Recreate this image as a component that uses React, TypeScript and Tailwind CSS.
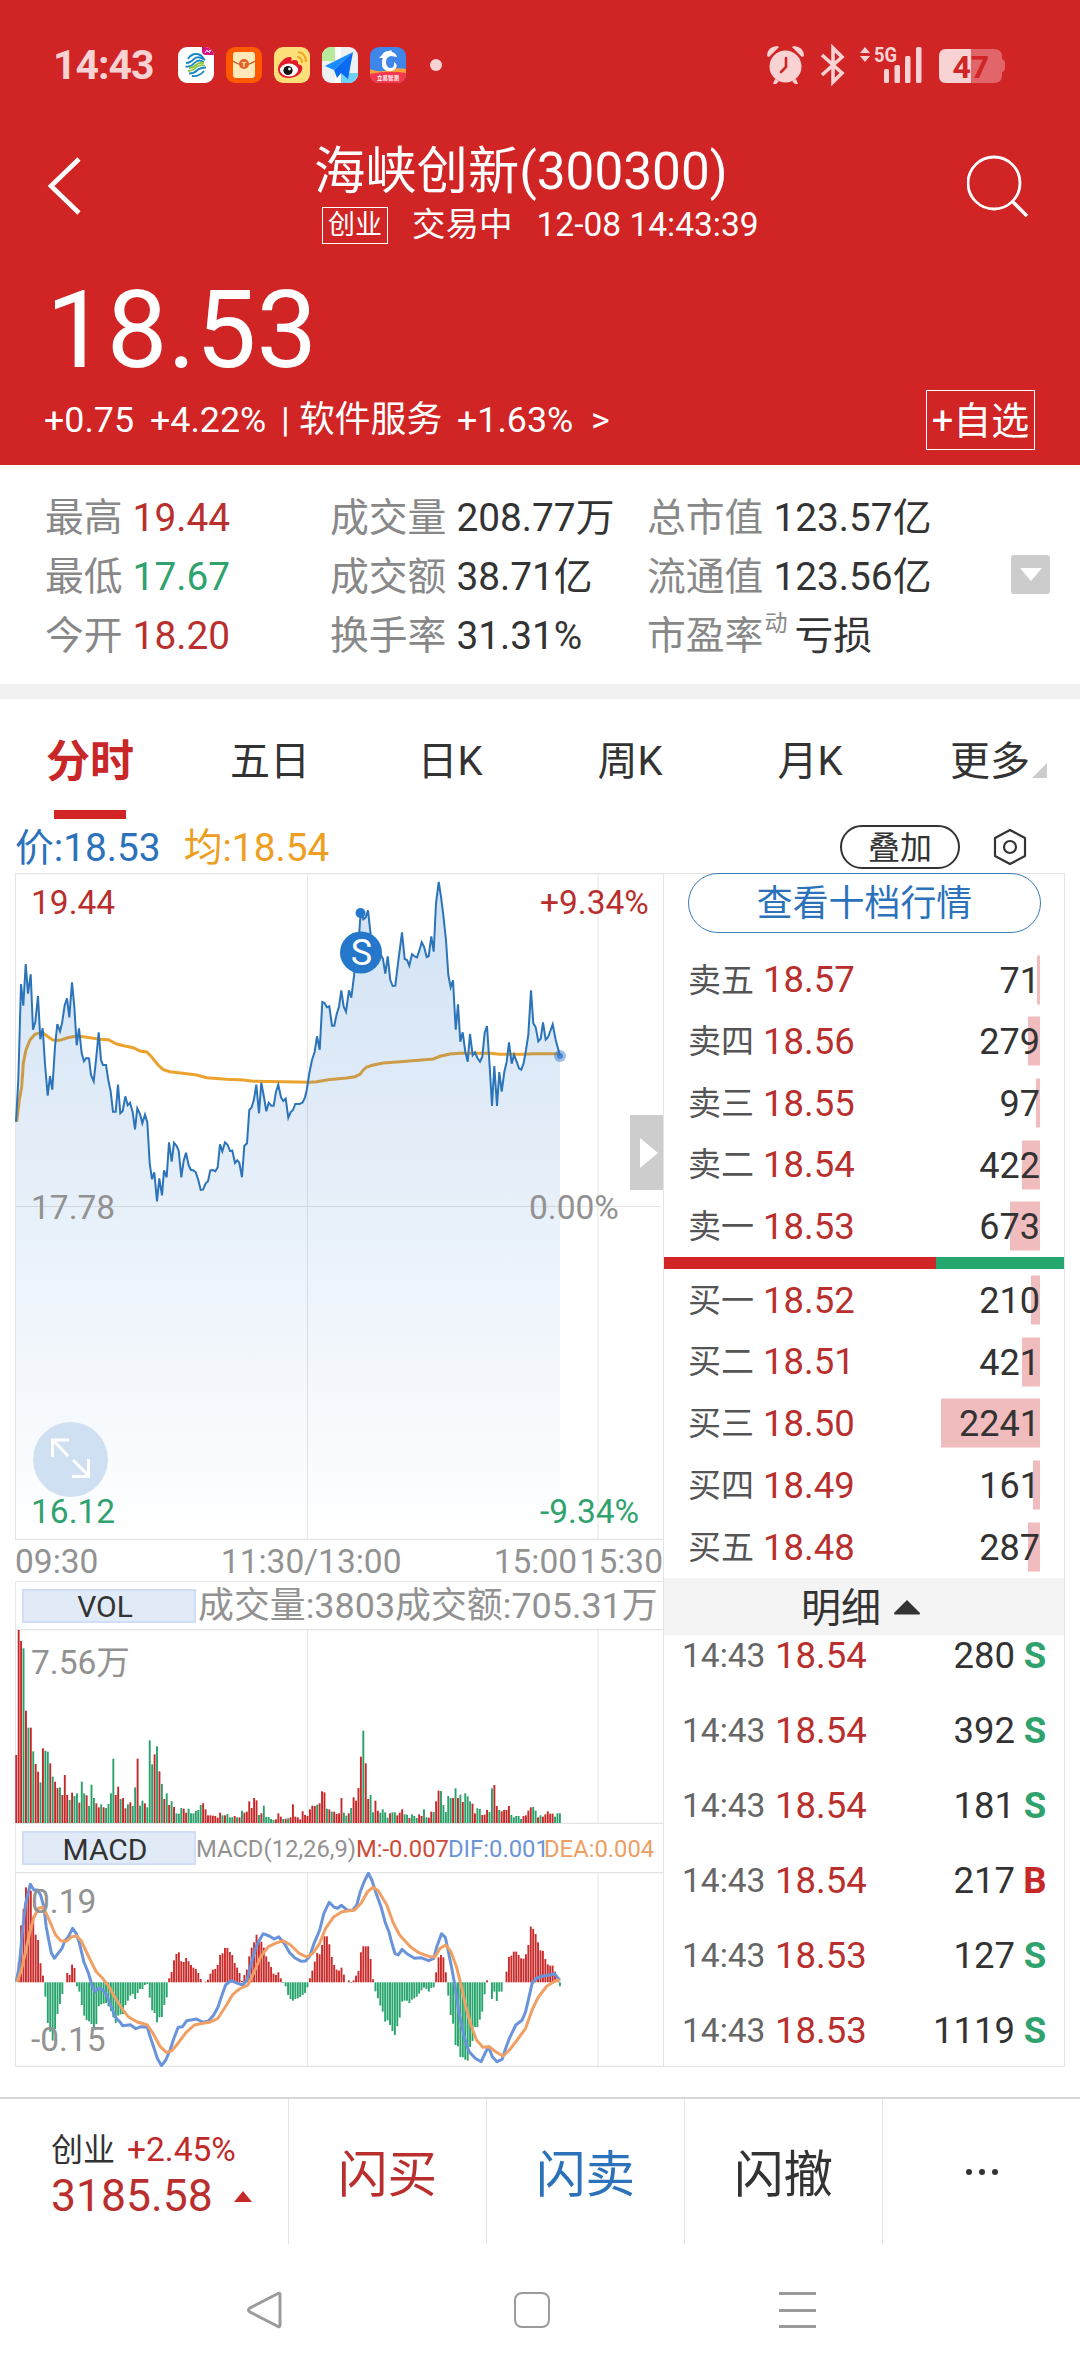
import type { ReactNode } from "react";
import clsx from "clsx";

interface Level {
  label: string;
  price: string;
  qty: number;
  bar: number;
}

interface Trade {
  price: string;
  qty: number;
  side: "S" | "B";
}

const sells: Level[] = [
  { label: "卖五", price: "18.57", qty: 71, bar: 3 },
  { label: "卖四", price: "18.56", qty: 279, bar: 12 },
  { label: "卖三", price: "18.55", qty: 97, bar: 4 },
  { label: "卖二", price: "18.54", qty: 422, bar: 18 },
  { label: "卖一", price: "18.53", qty: 673, bar: 30 },
];

const buys: Level[] = [
  { label: "买一", price: "18.52", qty: 210, bar: 9 },
  { label: "买二", price: "18.51", qty: 421, bar: 18 },
  { label: "买三", price: "18.50", qty: 2241, bar: 99 },
  { label: "买四", price: "18.49", qty: 161, bar: 7 },
  { label: "买五", price: "18.48", qty: 287, bar: 12 },
];

const trades: Trade[] = [
  { price: "18.54", qty: 280, side: "S" },
  { price: "18.54", qty: 392, side: "S" },
  { price: "18.54", qty: 181, side: "S" },
  { price: "18.54", qty: 217, side: "B" },
  { price: "18.53", qty: 127, side: "S" },
  { price: "18.53", qty: 1119, side: "S" },
];

// x,y pairs in thirds of a pixel
const PRICE =
  "48,785 55,660 63,372 70,437 77,312 84,401 92,343 99,509 106,485 114,408 121,538 128,505 135,612 143,707 150,648 157,689 165,560 172,492 180,514 186,490 194,436 201,415 208,472 216,367 223,440 230,556 237,505 245,580 252,604 259,594 267,595 273,645 281,664 288,600 296,517 303,600 309,615 318,615 325,660 332,695 339,755 347,755 354,674 361,760 368,753 376,709 383,736 390,728 398,757 405,808 412,745 420,762 427,790 435,764 442,787 449,910 456,958 463,937 471,1024 478,955 486,1006 492,931 500,952 507,847 515,905 522,848 530,858 536,872 544,952 551,902 558,878 566,916 573,930 580,931 587,937 595,960 602,990 609,989 617,970 624,964 631,931 639,930 646,934 653,922 660,853 667,874 675,847 683,855 690,873 697,872 705,909 712,901 718,908 726,952 733,858 741,850 748,750 755,742 762,718 769,674 777,760 784,668 792,712 799,754 806,728 814,737 821,737 828,695 835,674 843,712 850,723 857,716 865,773 872,756 879,750 886,732 894,732 901,731 908,727 915,712 920,690 928,640 936,600 944,575 951,529 959,569 967,426 973,428 981,442 988,439 996,497 1003,497 1010,462 1017,440 1024,391 1031,440 1038,455 1047,391 1054,413 1060,365 1068,300 1076,240 1082,158 1090,178 1097,172 1104,151 1112,225 1120,245 1130,262 1140,280 1149,297 1156,341 1163,289 1171,360 1178,378 1186,377 1194,310 1200,264 1206,217 1214,297 1221,300 1228,317 1236,283 1244,289 1251,292 1258,272 1265,247 1272,260 1280,291 1286,288 1294,229 1301,275 1308,130 1316,66 1323,110 1330,165 1338,240 1345,345 1352,382 1359,361 1367,509 1374,433 1381,545 1388,517 1396,575 1403,605 1410,522 1418,586 1425,577 1432,593 1440,605 1447,590 1454,518 1461,498 1469,620 1476,738 1483,618 1491,738 1498,636 1505,695 1513,636 1520,605 1527,547 1535,611 1542,584 1550,605 1557,625 1564,629 1571,608 1578,570 1585,525 1593,391 1600,490 1607,502 1615,544 1622,536 1629,487 1637,539 1644,532 1651,513 1658,493 1667,540 1680,587";

const AVERAGE =
  "50,785 58,720 65,680 70,610 78,570 90,540 105,523 118,519 130,520 145,531 160,541 180,541 200,534 225,529 250,530 275,534 300,538 325,539 350,552 375,558 400,563 420,573 440,576 455,591 475,616 490,629 510,635 560,641 590,645 620,653 680,658 730,660 760,664 850,665 930,667 950,665 985,659 1040,654 1065,650 1080,643 1090,630 1100,621 1120,615 1150,609 1200,605 1300,597 1320,589 1350,582 1380,580 1470,580 1500,583 1570,583 1600,581 1680,581";

const DIF =
  "38,485 45,440 52,340 60,250 71,193 79,210 88,210 95,225 103,262 108,320 114,360 120,398 127,415 136,400 145,385 152,362 160,350 170,325 178,340 186,370 196,425 207,460 215,495 222,515 232,503 240,510 250,525 260,560 270,592 280,605 287,617 305,614 318,626 330,620 345,622 350,645 358,675 368,715 378,737 388,720 398,690 407,655 417,622 427,620 437,602 460,597 475,607 488,603 500,585 510,562 517,535 528,495 540,482 552,488 568,495 578,480 588,430 598,385 606,362 616,341 630,348 642,357 652,350 665,370 678,398 690,414 705,424 715,423 725,408 735,370 748,330 758,280 770,247 782,262 790,265 799,256 812,270 825,271 835,255 843,215 852,185 862,160 870,180 880,220 892,262 902,310 910,335 917,370 924,400 932,405 941,388 953,402 970,415 985,413 1003,422 1015,415 1022,380 1033,341 1042,352 1050,400 1058,450 1065,500 1073,570 1080,615 1088,660 1098,695 1112,715 1126,725 1135,700 1143,680 1152,710 1163,725 1175,718 1182,690 1192,655 1207,615 1222,600 1230,575 1238,530 1245,490 1255,475 1270,468 1288,465 1297,460 1303,470 1310,482";

const DEA =
  "40,485 50,450 60,395 70,335 80,290 90,265 100,262 110,285 120,315 130,345 142,362 155,364 168,350 180,348 190,362 200,390 215,430 225,455 240,475 255,500 268,530 285,565 300,590 320,605 345,615 358,640 375,680 390,698 402,692 415,672 435,638 455,615 475,610 490,607 510,595 530,555 545,523 560,507 580,495 595,455 610,410 628,380 648,368 663,362 680,375 700,400 718,411 732,400 748,370 762,325 780,292 800,275 830,270 845,250 860,215 873,202 885,212 905,255 920,308 935,345 960,380 980,398 1005,410 1018,410 1030,385 1043,375 1055,395 1068,440 1080,500 1090,560 1102,615 1115,660 1130,682 1145,680 1160,695 1177,708 1192,690 1210,660 1230,625 1245,570 1260,530 1280,498 1300,482 1310,480";

// one bar per minute, negative means a falling minute
const VOLUME = [
  204, 579, 546, -524, 337, -286, 286, -215, 177, 154, -122, 224, -217, -214, 179, -139, 124, 105, -107, 84, 144, 84,
  -69, 91, -81, -89, 61, -124, -89, 83, -51, -115, -75, 59, 47, -56, 47, -45, -57, -89, -193, 84, 109, -72, 75, 44,
  -56, 62, -51, -107, 193, -52, -67, 59, -47, -248, -176, 206, -230, 155, -117, 72, -89, 54, -65, 48, -29, -28, -45,
  43, 31, -43, -29, -29, -36, -39, -54, 59, 41, 23, 23, 22, 21, 16, 31, -23, 23, -27, -17, -17, 21, -17, 17, -37, 31,
  34, 65, 45, 75, 68, -24, 29, -52, -18, -18, -12, -9, 11, 29, 19, -12, 13, -14, 17, 56, 19, 17, 11, 35, 24, 21, 41,
  52, 51, -55, 59, 95, 92, -43, 41, -34, 34, 27, 29, 75, -31, -22, 29, -45, 77, 67, 105, 199, -277, 179, 72, -84, -32,
  67, 37, -31, -41, -32, -16, 29, -32, -32, 23, 31, 41, -26, -25, 15, -26, -21, -15, 26, 21, -41, -17, 16, 34, -33,
  65, 97, -96, -54, -33, -81, -75, 75, -104, 75, -85, 63, -89, -80, -65, 58, 29, -44, -42, 24, 25, 39, -33, -104, 114,
  51, -39, 35, 39, 39, 51, -24, -17, -21, -21, -12, 21, 23, 37, 47, -48, -37, 17, -23, 19, 26, 35, 28, 28, -19, -29,
  -29,
];

const MACD = [
  0, 60, 171, 220, 285, 275, 275, 197, 143, 127, 57, 20, -43, -122, -148, -175, -140, -95, -65, -35, 0, 28, 22, 53, 43,
  -12, -28, -68, -100, -113, -117, -125, -140, -125, -72, -66, -64, -62, -72, -86, -105, -122, -100, -96, -95, -68,
  -55, -40, -35, -50, -32, -20, -20, -8, -5, -46, -84, -92, -120, -105, -104, -68, -45, 12, 31, 66, 85, 90, 63, 61, 73,
  63, 52, 44, 40, 28, 10, 0, 2, 8, 26, 38, 40, 52, 82, 87, 103, 103, 91, 82, 58, 44, 28, 4, 22, 38, 78, 104, 120, 143,
  128, 122, 104, 78, 62, 46, 26, 22, 30, 12, -2, -12, -38, -50, -55, -50, -48, -44, -38, -32, -15, 12, 35, 62, 88, 84,
  112, 138, 138, 114, 76, 52, 38, 35, 44, 23, 0, 6, -2, 6, 20, 34, 90, 108, 108, 108, 70, 9, -27, -48, -70, -88, -118,
  -114, -128, -146, -158, -132, -106, -58, -55, -55, -62, -52, -48, -43, -34, -24, -16, -20, -28, -17, -15, 30, 75,
  82, 75, 30, -40, -98, -124, -188, -192, -224, -225, -232, -235, -194, -176, -134, -134, -112, -88, -36, 6, 0, -50,
  -28, -56, -28, -28, 0, 32, 76, 80, 92, 92, 82, 72, 71, 84, 112, 167, 160, 145, 120, 96, 94, 70, 54, 50, 50, 32, 8,
  -12,
];

function toPoints(raw: string, sx: number, dy: number) {
  return raw
    .split(" ")
    .map((p) => {
      const [x, y] = p.split(",").map(Number);
      return `${(x / sx - 15).toFixed(1)},${(y / 3 - dy).toFixed(1)}`;
    })
    .join(" ");
}

function StatusBar() {
  return (
    <div className="flex h-[130px] items-center pl-[53px] pr-[73px]">
      <span className="w-[125px] text-[41px] font-bold leading-none tracking-[-1px] text-[#f9d3d3]">14:43</span>
      <div className="flex gap-3">
        <svg viewBox="0 0 36 36" className="h-9 w-9 rounded-[9px] bg-white">
          <path d="M24 0h12v8H28q-4 0-4-4z" fill="#d4107c" />
          <path d="M27 6l2-3 1 2 2-2M31 6l2-3" stroke="#fff" strokeWidth="0.9" fill="none" />
          <g fill="none" strokeWidth="1.8">
            <path d="M10 12q3-5 8-5t8 5" stroke="#1c86c7" />
            <path d="M8 16q4 0 8-4t11 1" stroke="#1c86c7" />
            <path d="M7.500 19.500q5 1 9-3.500t9-1" stroke="#1c86c7" />
            <path d="M11 21q4 0 7-3t8-2" stroke="#8cc63f" />
            <path d="M10 24q5 0 8-3.500t9-2" stroke="#8cc63f" />
            <path d="M11 26.500q5 0 8-3t9-3M14 29q7 1 12-5" stroke="#1c86c7" />
          </g>
        </svg>
        <svg viewBox="0 0 36 36" className="h-9 w-9 rounded-[9px] bg-[#ff5a00]">
          <rect x="7" y="5" width="22" height="26" rx="3" fill="#ffe9b8" />
          <path d="M7 14q11 8 22 0" stroke="#b9491b" strokeWidth="1.2" fill="none" />
          <circle cx="18" cy="17" r="5" fill="#e0622a" />
          <text x="18" y="20" textAnchor="middle" fontSize="8" fontWeight="700" fill="#ffe9b8">T</text>
        </svg>
        <svg viewBox="0 0 36 36" className="h-9 w-9 rounded-[9px] bg-[#ffdf7a]">
          <path d="M4 22c0-6 8-13 12-12 2 0 2 2 1 4 4-2 8-1 7 3 4 1 5 3 4 6-2 6-9 8-14 8-6 0-10-4-10-9z" fill="#e3192b" />
          <ellipse cx="15" cy="23" rx="9" ry="6.5" fill="#fff" />
          <circle cx="14" cy="23.500" r="4.600" fill="#111" />
          <circle cx="15.500" cy="22" r="1.400" fill="#fff" />
          <path d="M23 10q5 0 5 6M24 5q8 1 8 10" stroke="#f5a623" strokeWidth="2.200" fill="none" />
        </svg>
        <svg viewBox="0 0 36 36" className="h-9 w-9 rounded-[9px] bg-[#eef1f2]">
          <path d="M0 0h13v14H0z" fill="#b8ea9c" />
          <path d="M19 26h17v10H17z" fill="#6fd0f7" />
          <path d="M13 0h6v36h-6z" fill="#fff" />
          <path d="M31 5L3 19l9 4z" fill="#1b8cff" />
          <path d="M31 5L12 23l3 8 4-5 7 6z" fill="#0a6bf0" />
        </svg>
        <svg viewBox="0 0 36 36" className="h-9 w-9 rounded-[9px] bg-[#3e86ea]">
          <path d="M0 22q9 4 18 1t18-1v14H0z" fill="#f9a03a" />
          <path d="M0 27q18-4 36-1v10H0z" fill="#f2394f" />
          <path
            d="M9 11l3-3q2-4 7-4l2-1 1 2q4 1 5 5l-6-1q-5 1-5 6 0 5 4 6 5 0 4-6 4 2 2 6-3 4-8 3-7-1-6-9 0-3 1-4z"
            fill="#fff"
          />
          <text x="18" y="32.500" textAnchor="middle" fontSize="5.500" fontWeight="700" fill="#fff">立易智测</text>
        </svg>
      </div>
      <span className="ml-[24px] h-3 w-3 rounded-full bg-[#f9d3d3]" />
      <svg viewBox="765 43 242 42" className="ml-auto h-[42px] w-[242px]" fill="#f9d3d3">
        <circle cx="785.500" cy="65.500" r="16" />
        <path d="M767 55q0-9 10-10l2 1-10 10zM804 55q0-9-10-10l-2 1 10 10zM775 78l-2 5h3l3-3zM796 78l2 5h-3l-3-3z" />
        <path d="M786 57v9l-5 5" stroke="#d12425" strokeWidth="2.600" strokeLinecap="round" fill="none" />
        <path d="M822 54l20 18-9 9V47l9 9-20 18" fill="none" stroke="#f9d3d3" strokeWidth="3.600" />
        <path d="M860 52l5-6 5 6zM860 55l5 6 5-6z" />
        <text x="874" y="61" fontSize="21" fontWeight="700" textLength="23" lengthAdjust="spacingAndGlyphs">5G</text>
        <rect x="884" y="68" width="5" height="14" rx="1.500" />
        <rect x="894.500" y="64" width="5.500" height="18" rx="1.500" />
        <rect x="905" y="55" width="5.500" height="27" rx="1.500" />
        <rect x="916" y="46" width="5.500" height="36" rx="1.500" />
        <path d="M946 48h48q8 0 8 8v2q3 1 3 4v5q0 3-3 4v3q0 8-8 8h-48q-7 0-7-8V56q0-8 7-8z" fill="#e26669" />
        <path d="M946 48h25v34h-25q-7 0-7-8V56q0-8 7-8z" />
        <text x="952.500" y="76.500" fontSize="32" fontWeight="700" fill="#d12425">47</text>
      </svg>
    </div>
  );
}

function Header() {
  return (
    <header className="h-[465px] bg-[#d12425] text-white">
      <StatusBar />
      <div className="flex h-[120px] pl-[46px] pr-[51px]">
        <svg viewBox="0 0 36 60" className="mt-[26px] h-[60px] w-9" fill="none" stroke="#fff" strokeWidth="4.600">
          <path d="M33 3L5 30l28 27" />
        </svg>
        <div className="ml-[232px]">
          <h1 className="mt-[10px] text-[51.3px] leading-[64px]">海峡创新(300300)</h1>
          <div className="ml-[8px] mt-[3px] flex h-[37px] items-center text-[33.5px]">
            <span className="flex h-[37px] w-[66px] items-center justify-center border border-white text-[27px]">创业</span>
            <span className="ml-[24px]">交易中</span>
            <span className="ml-[24px]">12-08 14:43:39</span>
          </div>
        </div>
        <svg viewBox="0 0 62 62" className="ml-auto mt-[25px] h-[62px] w-[62px]" fill="none" stroke="#fff" strokeWidth="2.800">
          <circle cx="27" cy="28" r="26" />
          <path d="M45 46l15 15" strokeWidth="3.400" />
        </svg>
      </div>
      <div className="mt-[22px] h-[114px] pl-[46px] text-[108px] leading-[116px]">18.53</div>
      <div className="mt-1 flex h-[60px] items-center justify-between pl-[44px] pr-[45px] text-[35.8px]">
        <div className="flex pt-[2px]">
          <span className="w-[106px]">+0.75</span>
          <span className="w-[131px]">+4.22%</span>
          <span className="w-[18px]">|</span>
          <span className="w-[158px]">软件服务</span>
          <span className="w-[134px]">+1.63%</span>
          <span>&gt;</span>
        </div>
        <button className="flex h-[60px] w-[109px] items-center justify-center whitespace-nowrap border border-white pt-[2px] text-[38px]">
          +自选
        </button>
      </div>
    </header>
  );
}

function Stat({ label, value, color = "text-[#333]" }: { label: ReactNode; value: string; color?: string }) {
  return (
    <div className="flex gap-[10px]">
      <span className="text-[#888]">{label}</span>
      <span className={color}>{value}</span>
    </div>
  );
}

function Stats() {
  return (
    <section className="flex h-[219px] items-center pl-[45px] pr-[30px] text-[38.8px] leading-[59px]">
      <div className="mt-[4px] w-[285px]">
        <Stat label="最高" value="19.44" color="text-[#b92f2e]" />
        <Stat label="最低" value="17.67" color="text-[#2fa26e]" />
        <Stat label="今开" value="18.20" color="text-[#b92f2e]" />
      </div>
      <div className="mt-[4px] w-[317px]">
        <Stat label="成交量" value="208.77万" />
        <Stat label="成交额" value="38.71亿" />
        <Stat label="换手率" value="31.31%" />
      </div>
      <div className="mt-[4px]">
        <Stat label="总市值" value="123.57亿" />
        <Stat label="流通值" value="123.56亿" />
        <Stat
          label={
            <span className="flex h-[59px]">
              市盈率<span className="ml-px mt-[-12px] w-[20px] text-[23px]">动</span>
            </span>
          }
          value="亏损"
        />
      </div>
      <div className="ml-auto flex h-[39px] w-[39px] items-center justify-center rounded-[3px] bg-[#ccc]">
        <svg viewBox="0 0 22 13" className="h-[13px] w-[22px]">
          <path d="M0 0h22L11 13z" fill="#fff" />
        </svg>
      </div>
    </section>
  );
}

function Tabs() {
  const tabs = ["分时", "五日", "日K", "周K", "月K", "更多"];
  return (
    <nav className="grid h-[121px] grid-cols-6 text-center text-[40px] leading-[126px] text-[#333]">
      {tabs.map((tab, i) => (
        <div key={tab} className={clsx("relative", i === 0 && "text-[44px] font-bold text-[#c92627]")}>
          {tab}
          {i === 0 && <span className="absolute left-[54px] top-[111px] h-[9px] w-[72px] bg-[#d12425]" />}
          {i === 5 && (
            <svg viewBox="0 0 15 15" className="absolute left-[132px] top-[64px] h-[15px] w-[15px]">
              <path d="M15 0v15H0z" fill="#ccc" />
            </svg>
          )}
        </div>
      ))}
    </nav>
  );
}

function InfoRow() {
  return (
    <div className="flex h-[53px] items-center pl-[15px] pr-[53px] text-[38.8px]">
      <span className="pt-[3px] text-[#2b72bb]">价:18.53</span>
      <span className="ml-[23px] pt-[3px] text-[#ec9f22]">均:18.54</span>
      <button className="ml-auto flex h-[44px] w-[120px] items-center justify-center rounded-full border-2 border-[#333] pt-[2px] text-[32px] text-[#333]">
        叠加
      </button>
      <svg viewBox="0 0 34 38" className="ml-[33px] h-[38px] w-[34px]" fill="none" stroke="#333" strokeWidth="2.200">
        <path d="M17 2l15 8v18l-15 8-15-8V10z" strokeLinejoin="round" />
        <circle cx="17" cy="19" r="6" />
      </svg>
    </div>
  );
}

function Grid({ height, mid }: { height: number; mid?: number }) {
  return (
    <g stroke="#e4e4e4" strokeWidth="1">
      <path d={`M.5 0V${height}M292.500 0V${height}M583 0V${height}`} />
      <path d={`M0 .5H648M0 ${height - 0.5}H648`} strokeWidth="1.500" />
      {mid && <path d={`M0 ${mid}H646`} />}
    </g>
  );
}

function PriceChart() {
  const line = toPoints(PRICE, 3, 13);
  return (
    <div className="relative h-[667px]">
      <svg viewBox="0 0 648 667" className="h-[667px] w-[648px]" fontSize="33.500">
        <defs>
          <linearGradient id="area" x1="0" y1="0" x2="0" y2="667" gradientUnits="userSpaceOnUse">
            <stop offset="0" stopColor="#2b78cc" stopOpacity="0.220" />
            <stop offset="0.550" stopColor="#2b78cc" stopOpacity="0.100" />
            <stop offset="1" stopColor="#2b78cc" stopOpacity="0" />
          </linearGradient>
        </defs>
        <Grid height={667} mid={333.5} />
        <polyline points={toPoints(AVERAGE, 3, 13)} fill="none" stroke="#eba22f" strokeWidth="3" />
        <polygon points={`1,660 ${line} 545,660`} fill="url(#area)" />
        <polyline points={line} fill="none" stroke="#2b74b9" strokeWidth="2" />
        <circle cx="545" cy="183" r="6" fill="#2b74c8" opacity="0.450" />
        <circle cx="545" cy="183" r="3" fill="#2b74c8" opacity="0.700" />
        <circle cx="345.500" cy="40" r="5" fill="#2577cb" />
        <circle cx="346" cy="79.500" r="21" fill="#2577cb" />
        <text x="346.500" y="92" textAnchor="middle" fontSize="36" fill="#fff">S</text>
        <g fill="#b92f2e">
          <text x="16" y="41">19.44</text>
          <text x="525" y="41">+9.34%</text>
        </g>
        <g fill="#929292">
          <text x="16" y="346">17.78</text>
          <text x="514" y="346">0.00%</text>
        </g>
        <g fill="#2fa26e">
          <text x="16" y="650">16.12</text>
          <text x="525" y="650">-9.34%</text>
        </g>
      </svg>
      <button className="absolute left-[18px] top-[549px] h-[75px] w-[75px] rounded-full bg-[#cfe0f3]">
        <svg viewBox="0 0 75 75" className="h-[75px] w-[75px]" fill="none" stroke="#fff" strokeWidth="3">
          <path d="M19.500 35V18H36M20 18l15 16M40 38l16 16M39 54.500h16.500V37" />
        </svg>
      </button>
      <button className="absolute right-0 top-[242px] flex h-[75px] w-[33px] items-center justify-end bg-[#cdcdcd] pr-[5px]">
        <svg viewBox="0 0 18 30" className="h-[30px] w-[18px]">
          <path d="M0 0l18 15L0 30z" fill="#fff" />
        </svg>
      </button>
    </div>
  );
}

function IndicatorTag({ children }: { children: string }) {
  return (
    <span className="ml-[6px] flex h-[34px] w-[174px] shrink-0 items-center justify-center border-2 border-[#d0dff5] bg-[#e1ebf8] pr-[8px] pt-[2px] text-[30px] text-[#333]">
      {children}
    </span>
  );
}

function VolumeChart() {
  return (
    <svg viewBox="0 0 648 195" className="h-[195px] w-[648px]">
      <Grid height={195} />
      {VOLUME.map((v, i) => (
        <rect
          key={i}
          x={0.3 + i * 2.427}
          y={194 - Math.abs(v) / 3}
          width="1.900"
          height={Math.abs(v) / 3}
          fill={v > 0 ? "#c62828" : "#2aa06b"}
        />
      ))}
      <text x="16" y="45" fontSize="33.500" fill="#929292">7.56万</text>
    </svg>
  );
}

function MacdChart() {
  return (
    <svg viewBox="0 0 648 195" className="h-[195px] w-[648px]">
      <Grid height={195} />
      {MACD.map((v, i) => (
        <rect
          key={i}
          x={0.3 + i * 2.427}
          y={v > 0 ? 110.3 - v / 3 : 110.3}
          width="1.900"
          height={Math.abs(v) / 3}
          fill={v > 0 ? "#cb2a2a" : "#27a56c"}
        />
      ))}
      <g fill="none" strokeWidth="3" strokeLinejoin="round">
        <polyline points={toPoints(DIF, 2.34, 52)} stroke="#6a94da" />
        <polyline points={toPoints(DEA, 2.34, 52)} stroke="#f0a064" />
      </g>
      <g fontSize="33.500" fill="#929292">
        <text x="16" y="41">0.19</text>
        <text x="16" y="179">-0.15</text>
      </g>
    </svg>
  );
}

function Charts() {
  return (
    <div className="w-[648px]">
      <PriceChart />
      <div className="flex h-[41px] items-center whitespace-nowrap pt-[3px] text-[33.5px] text-[#929292]">
        <span className="w-[206px]">09:30</span>
        <span className="w-[273px]">11:30/13:00</span>
        <span className="w-[86px]">15:00</span>
        <span>15:30</span>
      </div>
      <div className="flex h-[48px] items-center whitespace-nowrap border-l border-t border-[#e8e8e8] text-[35.9px] text-[#929292]">
        <IndicatorTag>VOL</IndicatorTag>
        <span className="ml-[2px] pt-[2px]">成交量:3803成交额:705.31万</span>
      </div>
      <VolumeChart />
      <div className="flex h-[48px] items-center whitespace-nowrap border-l border-[#e8e8e8] text-[23.8px]">
        <IndicatorTag>MACD</IndicatorTag>
        <span className="w-[160px] pt-[3px] text-[#929292]">MACD(12,26,9)</span>
        <span className="w-[92px] pt-[3px] text-[#cc4b37]">M:-0.007</span>
        <span className="w-[96px] pt-[3px] text-[#6a94da]">DIF:0.001</span>
        <span className="pt-[3px] text-[#ec9f64]">DEA:0.004</span>
      </div>
      <MacdChart />
    </div>
  );
}

function Levels({ rows }: { rows: Level[] }) {
  return (
    <>
      {rows.map((r) => (
        <div key={r.label} className="relative flex flex-1 items-center px-[24px] text-[36.5px]">
          <span
            className="absolute right-[24px] top-1/2 h-[49px] -translate-y-1/2 bg-[#f0bcbe]"
            style={{ width: r.bar }}
          />
          <span className="w-[75px] pt-px text-[33px] text-[#555]">{r.label}</span>
          <span className="pt-[2px] text-[#b92f2e]">{r.price}</span>
          <span className="relative ml-auto pt-[2px] text-[36px] text-[#333]">{r.qty}</span>
        </div>
      ))}
    </>
  );
}

function OrderBook() {
  return (
    <div className="flex h-[1194px] w-[402px] flex-col border border-[#e4e4e4]">
      <button className="-mt-px ml-[24px] h-[60px] w-[353px] shrink-0 rounded-full border-[1.5px] border-[#3a7cbc] pt-[3px] text-[35.9px] leading-[55px] text-[#2b72bb]">
        查看十档行情
      </button>
      <div className="mt-[16px] flex h-[308px] shrink-0 flex-col">
        <Levels rows={sells} />
      </div>
      <div className="flex h-[12px] shrink-0 bg-[#24a870]">
        <div className="w-[272px] bg-[#d12425]" />
      </div>
      <div className="flex h-[309px] shrink-0 flex-col">
        <Levels rows={buys} />
      </div>
      <div className="flex h-[57px] shrink-0 items-center bg-[#f4f4f4] pl-[137px] text-[40px] text-[#333]">
        <span className="pt-[4px]">明细</span>
        <svg viewBox="0 0 28 16" className="ml-[12px] h-[16px] w-[28px]">
          <path d="M14 1L1 14q0 1.500 1 1.500h24q1 0 1-1.500z" fill="#333" />
        </svg>
      </div>
      <div className="-mt-[16px]">
        {trades.map((t, i) => (
          <div key={i} className="flex h-[75px] items-center pl-[18px] pr-[17px] text-[36.5px] leading-none">
            <span className="mt-[-2px] w-[93px] text-[33.5px] text-[#666]">14:43</span>
            <span className="text-[#b92f2e]">{t.price}</span>
            <span className="ml-auto text-[#333]">{t.qty}</span>
            <span
              className={clsx(
                "ml-[8px] w-[24px] text-center font-bold",
                t.side === "S" ? "text-[#2fa26e]" : "text-[#c62828]",
              )}
            >
              {t.side}
            </span>
          </div>
        ))}
      </div>
    </div>
  );
}

function ActionBar() {
  return (
    <div className="mt-[30px] flex h-[147px] border-t-2 border-[#d8d8d8]">
      <div className="w-[288px] pl-[51px] pt-[26px]">
        <div className="flex h-[50px] items-center gap-[12px] text-[33.5px]">
          <span className="text-[32px] text-[#333]">创业</span>
          <span className="text-[#c02a2a]">+2.45%</span>
        </div>
        <div className="flex h-[42px] items-center text-[44.5px] text-[#b92f2e]">
          3185.58
          <svg viewBox="0 0 18 11" className="ml-[21px] h-[11px] w-[18px]">
            <path d="M9 0l9 11H0z" fill="#c62828" />
          </svg>
        </div>
      </div>
      {[
        { label: "闪买", color: "text-[#b92f2e]" },
        { label: "闪卖", color: "text-[#2b72bb]" },
        { label: "闪撤", color: "text-[#333]" },
      ].map((a) => (
        <button key={a.label} className={clsx("w-[198px] border-l border-[#e4e4e4] pt-[7px] text-[49.5px]", a.color)}>
          {a.label}
        </button>
      ))}
      <div className="flex flex-1 items-center justify-center gap-[7px] border-l border-[#e4e4e4]">
        <span className="h-[6px] w-[6px] rounded-full bg-[#333]" />
        <span className="h-[6px] w-[6px] rounded-full bg-[#333]" />
        <span className="h-[6px] w-[6px] rounded-full bg-[#333]" />
      </div>
    </div>
  );
}

function NavBar() {
  return (
    <div className="flex h-[132px] items-center pl-[246px]">
      <svg viewBox="0 0 36 38" className="h-[38px] w-9" fill="none" stroke="#9b9b9b" strokeWidth="3">
        <path d="M34 4v30q0 3-3 1L4 21q-3-2 0-4L31 3q3-2 3 1z" />
      </svg>
      <div className="ml-[232px] h-9 w-9 rounded-[8px] border-[2.5px] border-[#9b9b9b]" />
      <div className="ml-[229px] flex h-9 w-[37px] flex-col justify-between">
        <span className="h-[3px] bg-[#9b9b9b]" />
        <span className="h-[3px] bg-[#9b9b9b]" />
        <span className="h-[3px] bg-[#9b9b9b]" />
      </div>
    </div>
  );
}

export default function App() {
  return (
    <div className="h-[2376px] w-[1080px] overflow-hidden bg-white font-[Roboto,'Noto_Sans_CJK_SC',sans-serif]">
      <Header />
      <Stats />
      <div className="h-[15px] bg-[#f1f1f1]" />
      <Tabs />
      <InfoRow />
      <div className="flex pl-[15px]">
        <Charts />
        <OrderBook />
      </div>
      <ActionBar />
      <NavBar />
    </div>
  );
}
